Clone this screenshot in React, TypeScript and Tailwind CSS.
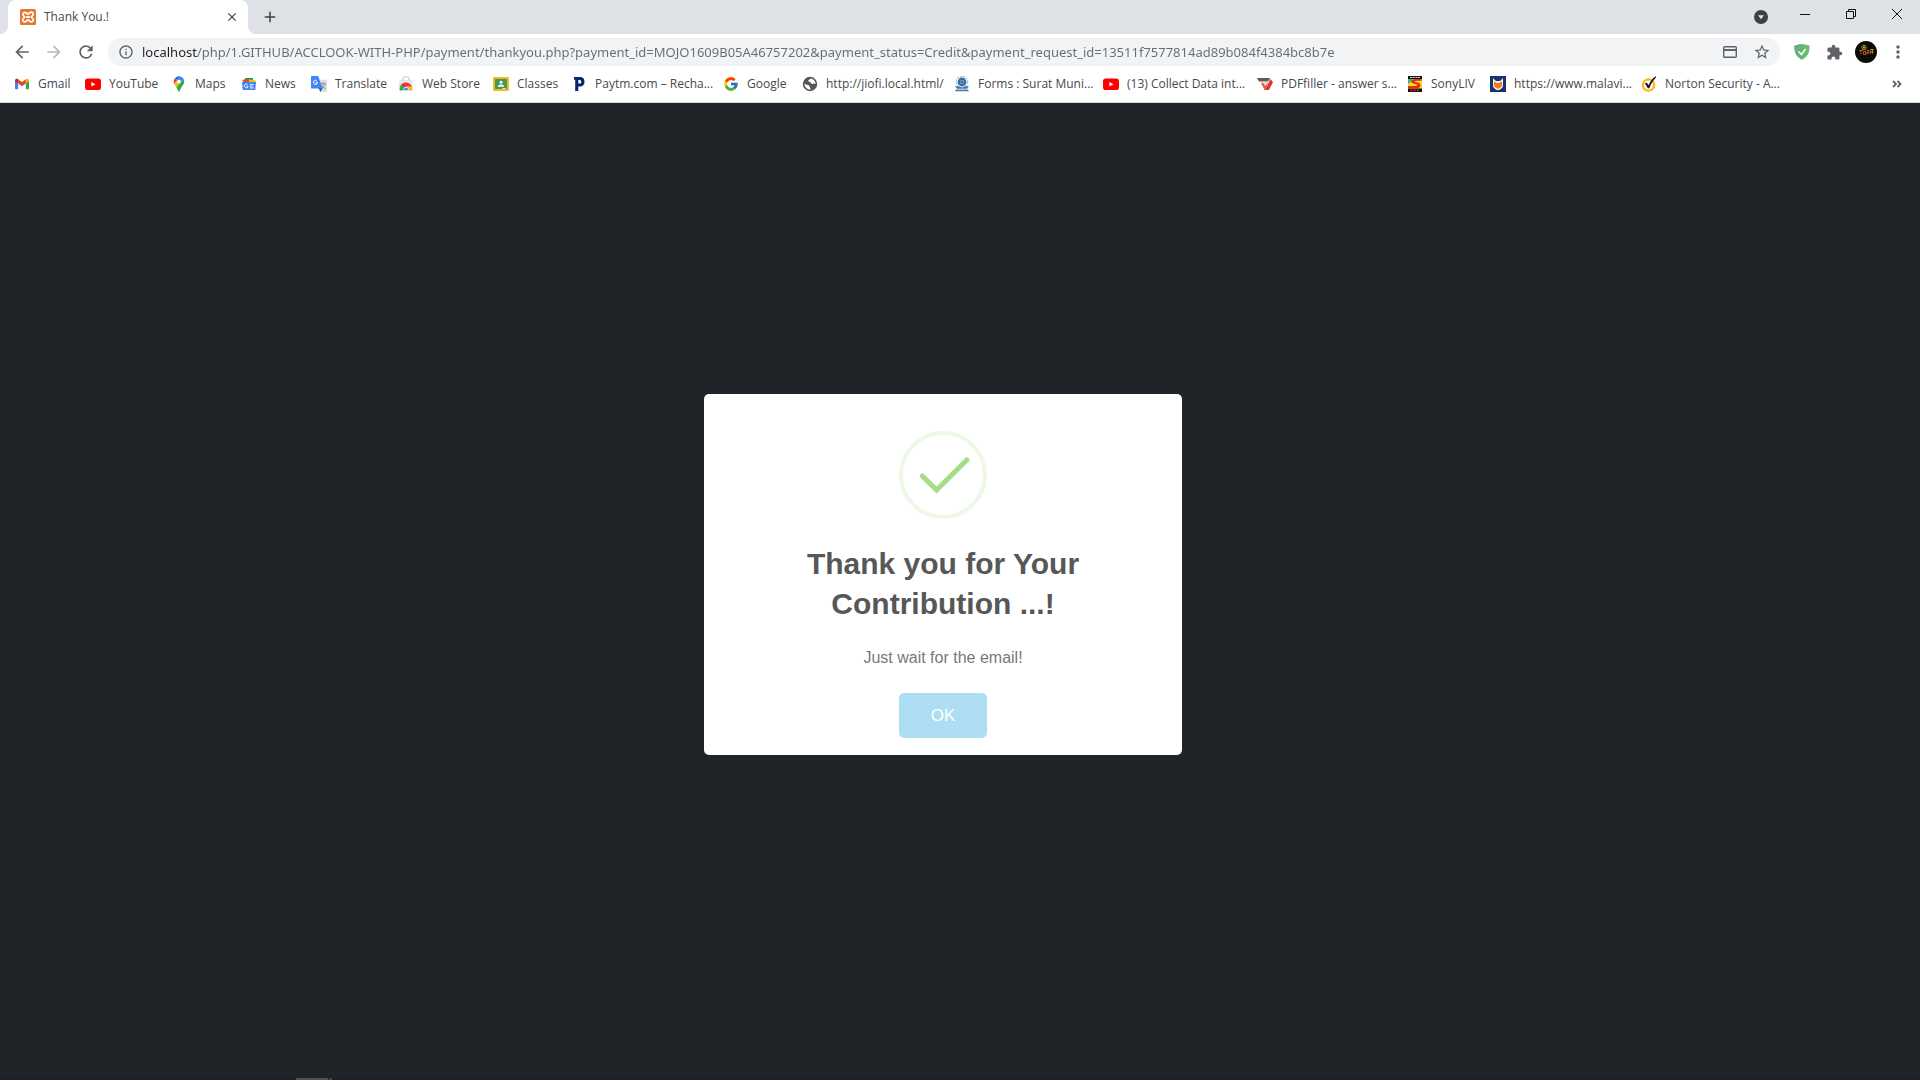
import type { ReactNode } from "react";
import {
  MdAdd,
  MdArrowBack,
  MdArrowForward,
  MdClose,
  MdExtension,
  MdInfoOutline,
  MdMoreVert,
  MdRefresh,
  MdStarBorder,
} from "react-icons/md";
import { FcGoogle } from "react-icons/fc";

const ADDRESS =
  "localhost/php/1.GITHUB/ACCLOOK-WITH-PHP/payment/thankyou.php?payment_id=MOJO1609B05A46757202&payment_status=Credit&payment_request_id=13511f7577814ad89b084f4384bc8b7e";

function Icon({ children, size = 16 }: { children: ReactNode; size?: number }) {
  return (
    <svg width={size} height={size} viewBox={`0 0 ${size} ${size}`} className="shrink-0" aria-hidden="true">
      {children}
    </svg>
  );
}

const XamppIcon = () => (
  <Icon>
    <rect width="16" height="16" rx="1.500" fill="#e8772e" />
    <path
      d="M5 3.400a2 2 0 0 0-1.600 3.200L4.600 8 3.400 9.400a2 2 0 1 0 3 2.600l1.600-1.200 1.600 1.200a2 2 0 1 0 3-2.600L11.400 8l1.200-1.400a2 2 0 1 0-3-2.600L8 5.200 6.400 4A2 2 0 0 0 5 3.400Z"
      fill="none"
      stroke="#fff"
      strokeWidth="1.700"
    />
    <path d="M6 8h4" stroke="#fff" strokeWidth="1.800" />
  </Icon>
);

const GmailIcon = () => (
  <Icon>
    <path d="M1 4v8.200c0 .6.4 1 1 1h2.200V7Z" fill="#4285f4" />
    <path d="M15 4v8.200c0 .6-.4 1-1 1h-2.200V7Z" fill="#34a853" />
    <path d="M1 4.500C1 2.800 2.900 2.100 4.200 3.100V7.400L1 5Z" fill="#c5221f" />
    <path d="M15 4.500c0-1.700-1.900-2.400-3.200-1.400v4.300L15 5Z" fill="#fbbc04" />
    <path d="M4.200 3.200 8 6.100l3.800-2.900v4.200L8 10.300 4.200 7.400Z" fill="#ea4335" />
  </Icon>
);

const YouTubeIcon = () => (
  <Icon>
    <rect y="2.500" width="16" height="11.500" rx="2.800" fill="#f00" />
    <path d="M6.400 5.900v4.600l4-2.300Z" fill="#fff" />
  </Icon>
);

const MapsIcon = () => (
  <Icon>
    <path d="M8 .3a5.300 5.300 0 0 0-4.100 1.900L6.300 4.300 9.700.6A6 6 0 0 0 8 .3Z" fill="#1a73e8" />
    <path d="M3.900 2.200A5.400 5.400 0 0 0 3.300 8l3-3.700Z" fill="#ea4335" />
    <path d="M9.700.6 6.300 4.300l3.300 2.600 3.100-3.800A5.300 5.300 0 0 0 9.700.6Z" fill="#4285f4" />
    <path d="M3.300 8c.5 1.100 1.400 2.100 2.100 3.200l4.200-4.300-3.300-2.600Z" fill="#fbbc04" />
    <path d="M5.400 11.200C6.300 12.600 7 15.700 8 15.700c1.200 0 1.300-3.100 2.900-5.100 1.500-1.900 3.200-3.900 1.800-7.500Z" fill="#34a853" />
    <circle cx="8" cy="5.600" r="1.900" fill="#fff" />
  </Icon>
);

const NewsIcon = () => (
  <Icon>
    <path d="m4 2 8 0v5H4Z" fill="#0c9d58" />
    <path d="m1.500 4 5-1.500L8 7H2.500Z" fill="#ea4335" />
    <path d="m8 3.200 7 1.300L13.500 8H8Z" fill="#fbbc04" />
    <path d="M1 6h14l-.6 7.200c0 .6-.4.9-1 .9H2.600c-.6 0-1-.3-1-.9Z" fill="#4285f4" />
    <path d="M6.700 8.700a1.900 1.900 0 1 0 .4 1.700H5.500M8.900 8.600h3.700M8.900 10.200h2.800M8.900 11.900h3.700" fill="none" stroke="#fff" strokeWidth=".9" />
  </Icon>
);

const TranslateIcon = () => (
  <Icon>
    <path d="M7 3.800h8.200c.4 0 .8.300.8.700v10.700c0 .5-.4.800-.8.800H9.500Z" fill="#dadce0" />
    <path d="M9.700 7.700h5M12.200 6.500v1.200M14 7.800c-.5 2.300-2 3.900-3.800 4.900M10.700 8.800c.7 1.900 1.900 3.200 3.800 4" fill="none" stroke="#7b8994" strokeWidth=".9" />
    <path d="m7.500 12 2 4 2-4Z" fill="#174ea6" />
    <path d="M.9 0h6.300L11.500 12.600H.9c-.5 0-.9-.4-.9-.9V.9C0 .4.400 0 .9 0Z" fill="#4285f4" />
    <path d="M6 5a2 2 0 1 0 .5 1.600H4.700" fill="none" stroke="#fff" strokeWidth="1" />
  </Icon>
);

const WebStoreIcon = () => (
  <Icon>
    <path d="M5 4V2.500C5 1.500 5.600 1 6.500 1h3c.9 0 1.500.5 1.500 1.500V4" fill="none" stroke="#c8cacc" strokeWidth="1.200" />
    <path d="M1.500 4h13l.5 10.500H1Z" fill="#e4e6e8" />
    <path d="M1.900 14.500a6.200 6.200 0 0 1 2-6.400L6 12l-.6 2.500Z" fill="#34a853" />
    <path d="M14.100 14.500a6 6 0 0 0-.2-4H8l2.600 4Z" fill="#fbbc04" />
    <path d="M3.400 8.800C5.800 5.500 11.500 5.800 13.900 10.500H8L5.800 12Z" fill="#e33b2e" />
    <path d="M5.500 14.500a2.600 2.600 0 1 1 5.100 0Z" fill="#4285f4" stroke="#fff" strokeWidth=".6" />
  </Icon>
);

const ClassroomIcon = () => (
  <Icon>
    <rect y="1" width="16" height="14" rx="1.200" fill="#f6bb18" />
    <rect x="2" y="3" width="12" height="10" fill="#3f9a55" />
    <circle cx="8" cy="6.300" r="1.500" fill="#fff" />
    <path d="M4.600 10.800c.3-3 6.500-3 6.800 0Z" fill="#fff" />
    <path d="M9.500 12h3v1h-3Z" fill="#e8f0e9" />
  </Icon>
);

const PaytmIcon = () => (
  <Icon>
    <path d="M3 1h6c3 0 4.500 2 4.500 4.800S11.700 10.600 9 10.600H7.300V15H4.200V3.800H3Zm4.300 3v3.600h1.400c2.200 0 2.200-3.600 0-3.600Z" fill="#002970" fillRule="evenodd" />
  </Icon>
);

const GlobeIcon = () => (
  <Icon>
    <circle cx="8" cy="8" r="7.200" fill="#54585d" />
    <path d="M2.500 7.800c1.200.2 1.900 1.200 3.300 1.200 1.200 0 1.600.8 1.800 1.800.2.800 1.100 1.200 1 2.700-3 .5-6.200-2.200-6.100-5.700ZM8.500 2.400c-.5 1.300-2.600 1-2.300 2.500.2 1.200 2.200.5 2.500 1.700.2 1 1.300 1.600 2.300 1.100 1-.4 1.500.3 2.600.2-.1-3-2.300-5.300-5.100-5.500Z" fill="#fff" />
  </Icon>
);

const SuratIcon = () => (
  <Icon>
    <circle cx="8" cy="6" r="5.700" fill="none" stroke="#a9c0d8" strokeWidth="1.200" strokeDasharray="2 1" />
    <circle cx="8" cy="6" r="4.400" fill="#356aa6" />
    <circle cx="8" cy="6" r="2.200" fill="#9bb9d7" />
    <path d="M6.500 4.500h3v3h-3Z" fill="#3f6e9f" />
    <path d="M1 10.500 4 10l4 1.500 4-1.500 3 .5-2 2 2 2.700H1l2-2.700Z" fill="#4777aa" />
    <path d="M2.500 13.200h11" stroke="#dce7f2" strokeWidth="1" />
  </Icon>
);

const PdfFillerIcon = () => (
  <Icon>
    <path d="M0 2h13l-1.800 3.600H2Z" fill="#5b5b5b" />
    <path d="M3.800 6.700h7L9.500 14H7.600Z" fill="#ef5a48" />
    <path d="M13.300 2.700 16 6.300 11.800 14H8.600Z" fill="#d8372a" />
    <path d="m6 6.700 2.500 3.500 1.800-3.500Z" fill="#fbd5cf" />
  </Icon>
);

const SonyLivIcon = () => (
  <Icon>
    <rect x="1" width="14" height="16" fill="#111" />
    <path d="M3 1.500h10" stroke="#d6d6d6" strokeDasharray="2 .7" />
    <rect x="1" y="3" width="14" height="9.500" fill="#f9dd16" />
    <path d="M1 3h5L3 6.500 1 8Z" fill="#38b3a0" />
    <path d="M14.500 3H8C3.500 3 3 7 6.500 7.600l3 .6c1.600.5.5 1.800-1.500 1.800H1v2.500h8c5 0 6-4.800 2-6L8.500 6c-1.500-.5-.8-1.300.8-1.300h5.200Z" fill="#e42a1d" />
    <path d="M3.500 14.300h9" stroke="#e42a1d" strokeWidth="1.600" strokeDasharray="2 1.200" />
  </Icon>
);

const MalaviIcon = () => (
  <Icon>
    <rect width="16" height="16" fill="#19336b" />
    <path d="M3 2.300 6 5h4l3-2.700v7.200c0 2.500-2.700 4.200-5 4.800-2.300-.6-5-2.300-5-4.800Z" fill="#f4f1ef" />
    <path d="m4 5.500 4 1.700 4-1.700v4c0 1.700-2.500 2.500-4 3.300-1.500-.8-4-1.600-4-3.300Z" fill="#ee7a2d" />
  </Icon>
);

const NortonIcon = () => (
  <Icon>
    <circle cx="7.500" cy="9" r="5.700" fill="#fff" stroke="#fdb813" strokeWidth="2.200" />
    <path d="m3.800 7.300 2-.6 1.700 2.600C9 6 11.500 2.500 14.700.3L15 1.500C11.800 4.600 9.800 8 8.300 12.300H6.800C6 10.500 5 8.800 3.800 7.300Z" fill="#111" />
  </Icon>
);

const bookmarks = [
  { label: "Gmail", icon: <GmailIcon />, width: "w-[71px]" },
  { label: "YouTube", icon: <YouTubeIcon />, width: "w-[86px]" },
  { label: "Maps", icon: <MapsIcon />, width: "w-[70px]" },
  { label: "News", icon: <NewsIcon />, width: "w-[70px]" },
  { label: "Translate", icon: <TranslateIcon />, width: "w-[87px]" },
  { label: "Web Store", icon: <WebStoreIcon />, width: "w-[95px]" },
  { label: "Classes", icon: <ClassroomIcon />, width: "w-[78px]" },
  { label: "Paytm.com – Recha...", icon: <PaytmIcon />, width: "w-[152px]" },
  { label: "Google", icon: <FcGoogle size={16} className="shrink-0" />, width: "w-[79px]" },
  { label: "http://jiofi.local.html/", icon: <GlobeIcon />, width: "w-[152px]" },
  { label: "Forms : Surat Muni...", icon: <SuratIcon />, width: "w-[149px]" },
  { label: "(13) Collect Data int...", icon: <YouTubeIcon />, width: "w-[154px]" },
  { label: "PDFfiller - answer s...", icon: <PdfFillerIcon />, width: "w-[150px]" },
  { label: "SonyLIV", icon: <SonyLivIcon />, width: "w-[83px]" },
  { label: "https://www.malavi...", icon: <MalaviIcon />, width: "w-[151px]" },
  { label: "Norton Security - A...", icon: <NortonIcon />, width: "w-[151px]" },
];

function ToolButton({ label, children }: { label: string; children: ReactNode }) {
  return (
    <button type="button" aria-label={label} className="flex size-8 shrink-0 items-center justify-center text-[#5f6368]">
      {children}
    </button>
  );
}

function TabStrip() {
  return (
    <div className="flex h-[34px] bg-[#dee1e6]">
      <div className="flex w-2 items-end bg-white">
        <div className="h-full w-2 rounded-br-lg bg-[#dee1e6]" />
      </div>
      <div className="flex w-60 items-center rounded-t-lg bg-white pr-2 pl-3">
        <XamppIcon />
        <span className="ml-2 flex-1 text-[12px] text-[#45494d]">Thank You.!</span>
        <button type="button" aria-label="Close tab" className="flex size-4 items-center justify-center text-[#3c4043]">
          <MdClose size={14} />
        </button>
      </div>
      <div className="flex w-2 items-end bg-white">
        <div className="h-full w-2 rounded-bl-lg bg-[#dee1e6]" />
      </div>
      <button type="button" aria-label="New tab" className="flex w-7 items-center justify-center text-[#3c4043]">
        <MdAdd size={18} />
      </button>
      <div className="flex-1" />
      <button type="button" aria-label="Search tabs" className="flex w-[42px] items-center justify-center">
        <Icon>
          <circle cx="8" cy="8" r="7" fill="#3c4043" />
          <path d="M5 6.300h6L8 10.300Z" fill="#dee1e6" />
        </Icon>
      </button>
      {[
        { name: "Minimize", d: "M3 8.500h10" },
        { name: "Restore", d: "M3.500 5.500h7v7h-7ZM5.500 5.500v-2h7v7h-2" },
        { name: "Close", d: "m3 3 10 10M13 3 3 13" },
      ].map((control) => (
        <button key={control.name} type="button" aria-label={control.name} className="flex w-[46px] items-center justify-center pb-1.5">
          <Icon>
            <path d={control.d} fill="none" stroke="#111" />
          </Icon>
        </button>
      ))}
    </div>
  );
}

function Toolbar() {
  return (
    <div className="flex h-9 items-center bg-white px-1.5">
      <ToolButton label="Back">
        <MdArrowBack size={20} />
      </ToolButton>
      <div className="opacity-45">
        <ToolButton label="Forward">
          <MdArrowForward size={20} />
        </ToolButton>
      </div>
      <ToolButton label="Reload">
        <MdRefresh size={20} />
      </ToolButton>
      <div className="ml-1.5 flex h-7 flex-1 items-center rounded-full bg-[#f1f3f4] pr-0.5 pl-2.5 text-[#5f6368]">
        <MdInfoOutline size={16} className="shrink-0" />
        <input
          type="text"
          aria-label="Address"
          defaultValue={ADDRESS}
          className="ml-2 h-full min-w-0 flex-1 bg-[linear-gradient(to_right,#202124_56px,#686c70_56px)] bg-clip-text font-['Noto_Sans','Open_Sans',sans-serif] text-[13px] text-transparent outline-none"
        />
        <ToolButton label="Payment methods">
          <Icon>
            <rect x="1.700" y="2.700" width="12.600" height="10.600" rx="1" fill="none" stroke="#5f6368" strokeWidth="1.400" />
            <path d="M1.500 6h13" stroke="#5f6368" strokeWidth="2" />
          </Icon>
        </ToolButton>
        <ToolButton label="Bookmark this tab">
          <MdStarBorder size={18} />
        </ToolButton>
      </div>
      <div className="ml-1.5 flex">
        <ToolButton label="Ad blocker">
          <Icon>
            <path d="M8 .2C10.500.2 13.500.8 15.600 1.700c0 5.300-.6 10.100-7.600 14.100C1 11.800.4 7 .4 1.700 2.500.8 5.500.2 8 .2Z" fill="#68bc71" />
            <path d="M8 .2C5.500.2 2.500.8.4 1.700.4 7 1 11.800 8 15.800Z" fill="#67b279" />
            <path d="m4.600 7.500 2.800 3 4.200-5.600" fill="none" stroke="#fff" strokeWidth="1.500" />
          </Icon>
        </ToolButton>
        <ToolButton label="Extensions">
          <MdExtension size={17} />
        </ToolButton>
        <ToolButton label="Profile">
          <Icon size={22}>
            <circle cx="11" cy="11" r="11" fill="#0c0b0b" />
            <circle cx="9" cy="6.500" r="2.300" fill="none" stroke="#b3941d" strokeWidth="1" />
            <circle cx="9" cy="6.500" r="1" fill="#f1d22e" />
            <path d="M4 9.500h4M6 9.500v4M8.500 10.500h2v3h-2ZM12 13.500v-4h2v2.500h-2M15.500 13V9.500l2 3V9" fill="none" stroke="#b9571d" strokeWidth="1" />
            <path d="M15.500 8.500h3M17 11h1.500" stroke="#d9a721" strokeWidth="1" />
          </Icon>
        </ToolButton>
        <ToolButton label="Menu">
          <MdMoreVert size={20} />
        </ToolButton>
      </div>
    </div>
  );
}

function BookmarksBar() {
  return (
    <nav aria-label="Bookmarks" className="flex h-[33px] items-center border-b border-[#d5d7da] bg-white pr-[11px] pb-1 pl-3.5">
      {bookmarks.map((item) => (
        <a key={item.label} href="#" className={`flex shrink-0 items-center gap-2 whitespace-nowrap text-[12px] text-[#45494d] ${item.width}`}>
          {item.icon}
          <span>{item.label}</span>
        </a>
      ))}
      <button type="button" aria-label="More bookmarks" className="ml-auto flex size-6 items-center justify-center">
        <Icon>
          <path d="m4 5 3 3-3 3M8.500 5l3 3-3 3" fill="none" stroke="#5f6368" strokeWidth="1.800" />
        </Icon>
      </button>
    </nav>
  );
}

function ThankYouDialog() {
  return (
    <section
      role="dialog"
      aria-labelledby="dialog-title"
      className="flex w-full max-w-[478px] flex-col items-center rounded-[5px] bg-white p-[17px] text-center font-['Liberation_Sans',Arial,sans-serif]"
    >
      <svg width="88" height="88" viewBox="0 0 88 88" className="mt-5" aria-hidden="true">
        <circle cx="44" cy="44" r="42" fill="none" stroke="#edf8e7" strokeWidth="4" />
        <path d="M23.300 45 37.600 59 68 28.800" fill="none" stroke="#a5dc86" strokeWidth="5" strokeLinecap="round" />
      </svg>
      <h2 id="dialog-title" className="my-[25px] text-[30px] leading-10 font-semibold text-[#575757]">
        Thank you for Your Contribution ...!
      </h2>
      <p className="text-[16px] leading-[18px] text-[#797979]">Just wait for the email!</p>
      <button type="button" className="mt-[26px] h-[45px] rounded-[5px] bg-[#aedef4] px-8 text-[17px] font-medium text-white">
        OK
      </button>
    </section>
  );
}

export default function App() {
  return (
    <div className="flex min-h-screen flex-col bg-[#202328] font-['Open_Sans','Noto_Sans',sans-serif]">
      <header>
        <TabStrip />
        <Toolbar />
        <BookmarksBar />
      </header>
      <main className="flex flex-1 items-center justify-center pr-[34px] pb-8">
        <ThankYouDialog />
      </main>
      <footer className="flex h-0.5 gap-px bg-[#231f20] pl-[296px]">
        <div className="w-8 bg-[#565252]" />
        <div className="w-[3px] bg-[#4a4646]" />
      </footer>
    </div>
  );
}
